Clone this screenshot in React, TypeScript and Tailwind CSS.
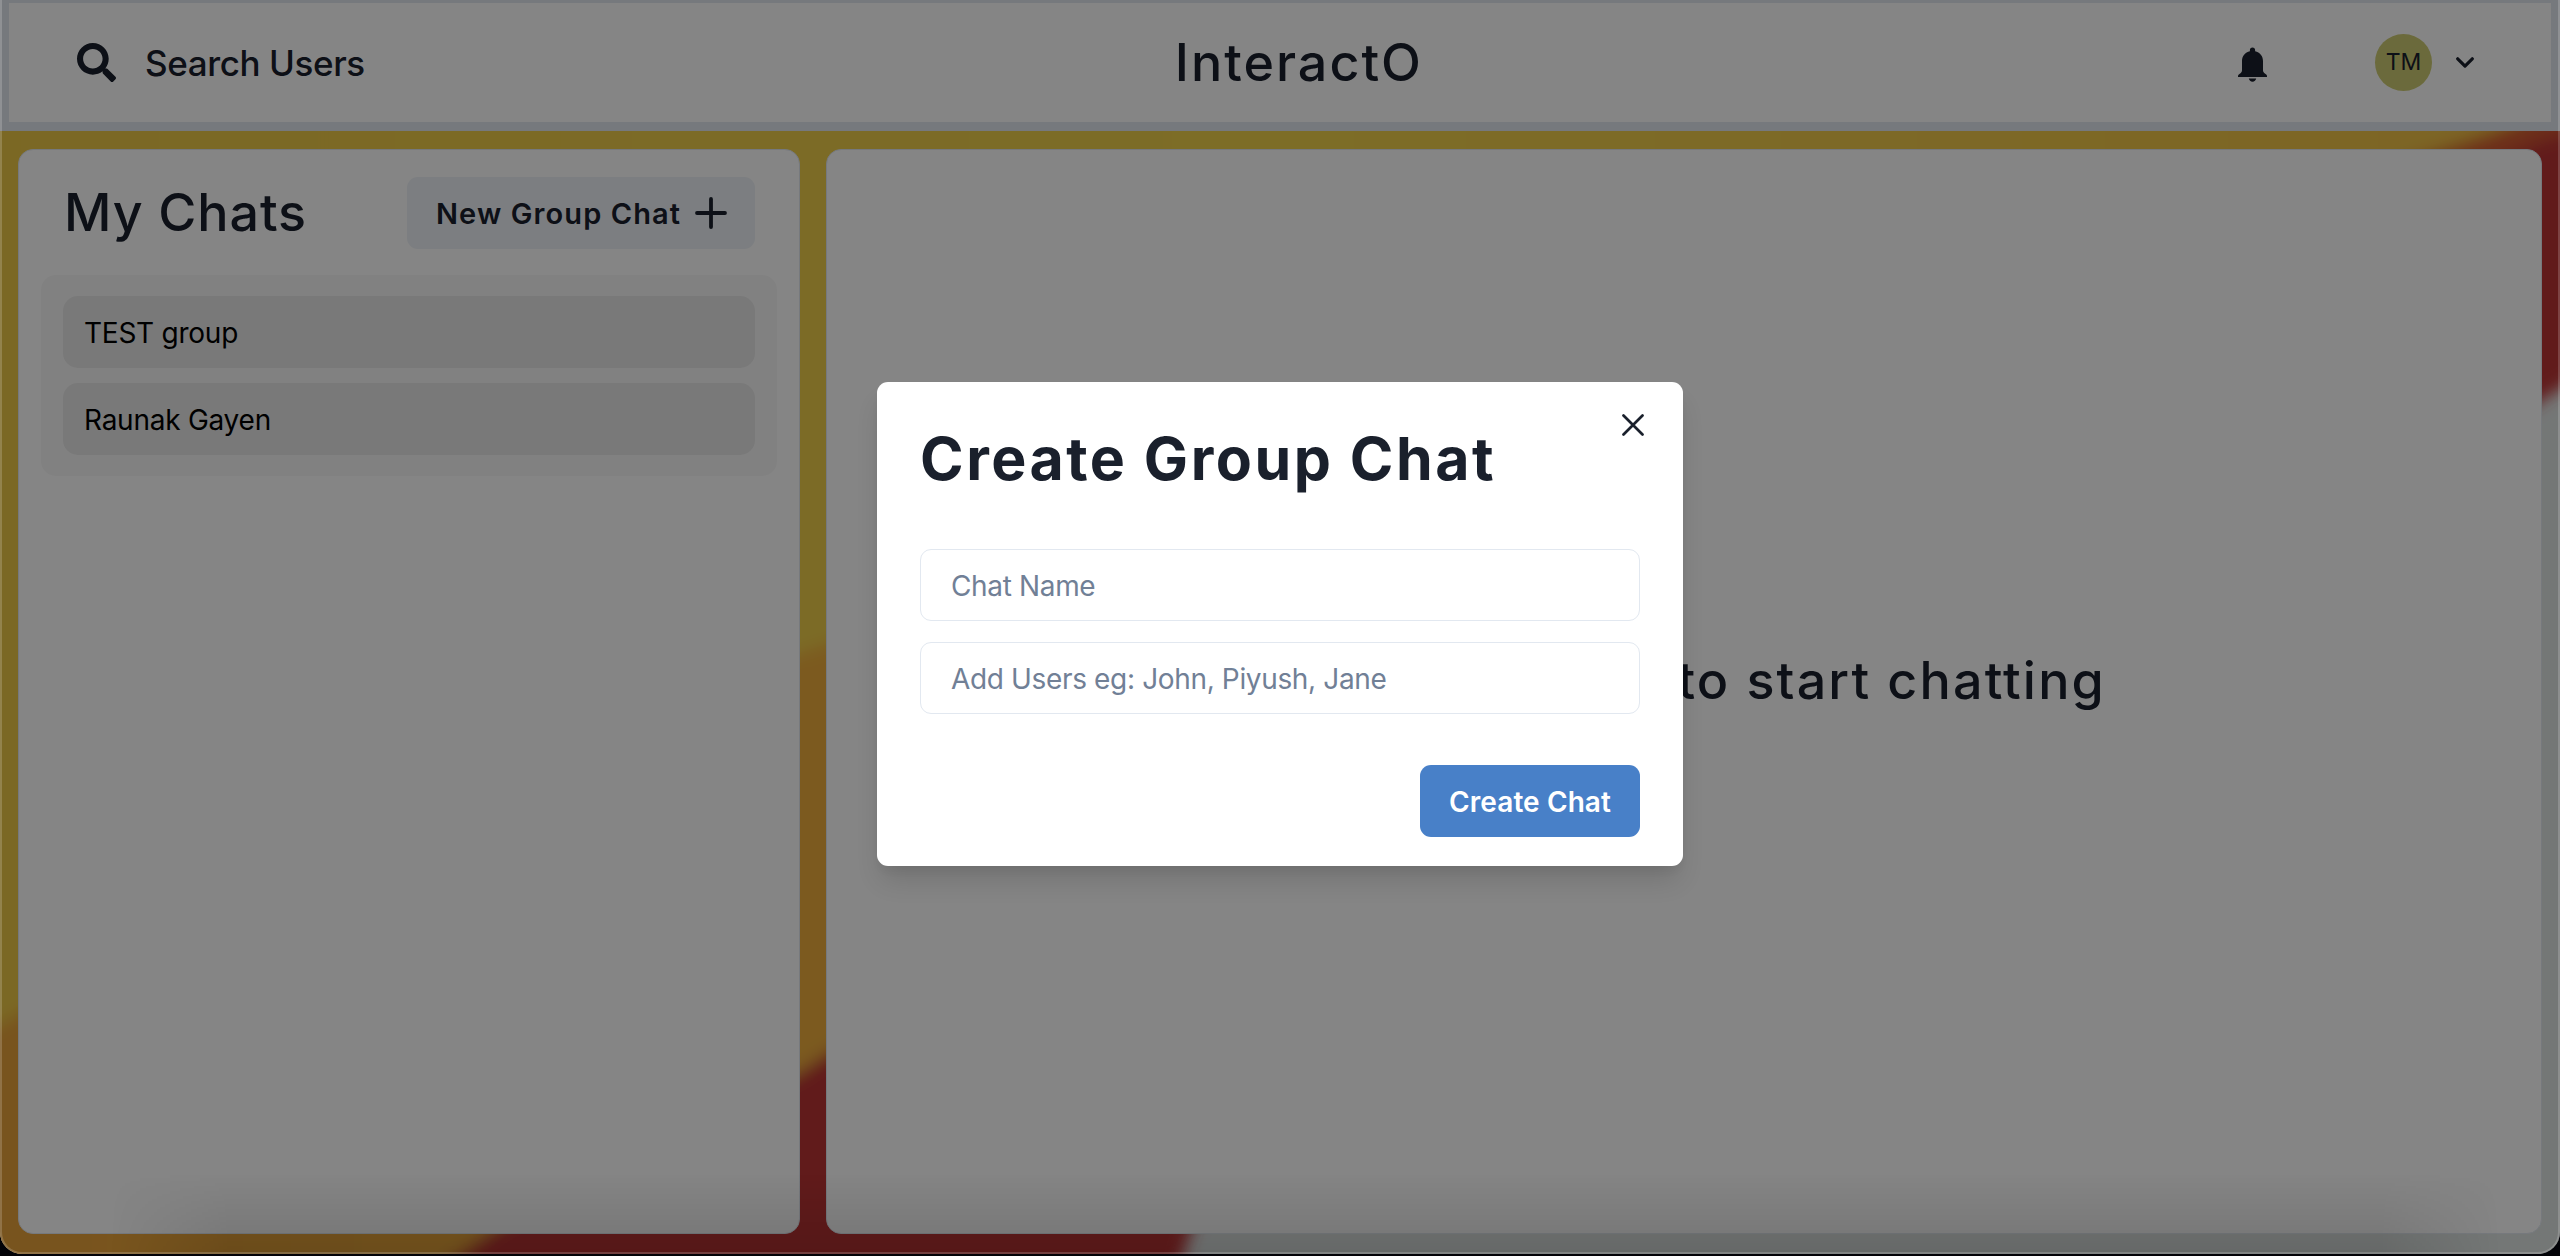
import { FaSearch } from "react-icons/fa";

const chats = ["TEST group", "Raunak Gayen"];

function Backdrop() {
  return (
    <svg className="absolute inset-0 h-full w-full" viewBox="0 0 2560 1254" preserveAspectRatio="none" aria-hidden="true">
      <defs>
        <filter id="soft" x="-5%" y="-5%" width="110%" height="110%">
          <feGaussianBlur stdDeviation="8" />
        </filter>
        <linearGradient id="sun" x1="0" y1="0" x2="1" y2="0">
          <stop offset="0" stopColor="#ebc745" />
          <stop offset="0.5" stopColor="#efd14a" />
          <stop offset="1" stopColor="#efbf45" />
        </linearGradient>
        <linearGradient id="amber" x1="0" y1="0" x2="1" y2="0">
          <stop offset="0" stopColor="#e6a03a" />
          <stop offset="0.4" stopColor="#eeb03e" />
          <stop offset="1" stopColor="#d0542f" />
        </linearGradient>
      </defs>
      <rect width="2560" height="1254" fill="#dfe4e3" />
      <g filter="url(#soft)">
        <path d="M-60 -60H2640V340L2550 395C2100 700 1400 800 1190 1234L1164 1320H-60Z" fill="#bb3434" />
        <path d="M-60 -60H2640V110L2540 141L2400 200L826 1054L800 1072L500 1225L450 1260L400 1320H-60Z" fill="url(#amber)" />
        <path d="M-60 -60H2640V70L2490 133C2000 300 1300 480 826 644L800 653C500 780 200 900 0 1025L-60 1060Z" fill="url(#sun)" />
      </g>
    </svg>
  );
}

function BellIcon() {
  return (
    <svg className="mt-1 h-[35px] w-[29px]" viewBox="0 0 29 35" fill="currentColor" aria-hidden="true">
      <path d="M14.5 0.5c1.6 0 2.6 1.1 2.6 2.5v1.3c4.8 1 7.9 4.800 7.900 9.700v9.500c0 1 .4 1.800 1.200 2.400l1.700 1.300c.7.5 1.100 1.100 1.100 1.800v.9H0v-.9c0-.7.4-1.300 1.100-1.800l1.700-1.300c.8-.6 1.200-1.400 1.200-2.400V14c0-4.900 3.100-8.700 7.900-9.700V3c0-1.400 1-2.500 2.600-2.500z" />
      <path d="M10.800 31.500h7.400c-.4 2-1.800 3.200-3.700 3.200s-3.300-1.200-3.700-3.200z" />
    </svg>
  );
}

function Header() {
  return (
    <header className="flex h-[131px] shrink-0 items-center justify-between border-x-9 border-t-3 border-b-9 border-[#e2e8f0] bg-white pr-[77px] pl-[68px]">
      <div className="flex items-center">
        <FaSearch className="-mt-px size-[39px]" />
        <span className="mt-0.5 ml-[29px] text-[35px] leading-none font-medium tracking-[-0.4px]">Search Users</span>
      </div>
      <h1 className="-ml-[5px] pt-px text-center text-[52px] leading-none font-medium tracking-[2px]">InteractO</h1>
      <div className="flex items-center justify-end">
        <BellIcon />
        <div className="ml-[108px] flex size-[57px] items-center justify-center rounded-full bg-[#cecc73] text-[23px]">TM</div>
        <svg className="ml-[24px] h-[11px] w-[18px]" viewBox="0 0 18 11" fill="none" stroke="currentColor" strokeWidth="3.2" strokeLinecap="round" strokeLinejoin="round" aria-hidden="true">
          <path d="M1.700 1.800 9 9.100l7.300-7.300" />
        </svg>
      </div>
    </header>
  );
}

function ChatList() {
  return (
    <aside className="flex w-[782px] flex-col rounded-[15px] border border-[#e2e8f0] bg-white px-[22px] pt-[27px]">
      <div className="flex items-center justify-between pr-[22px] pl-[23px]">
        <h2 className="text-[52px] leading-none font-medium tracking-[0.900px]">My Chats</h2>
        <button className="flex h-[72px] w-[348px] items-center rounded-[11px] bg-[#edf2f7] pl-[29px] text-[29px] leading-none font-semibold tracking-[1.100px] whitespace-nowrap">
          New Group Chat
          <svg className="ml-[14px] size-8" viewBox="0 0 32 32" stroke="currentColor" strokeWidth="3.800" strokeLinecap="round" aria-hidden="true">
            <path d="M16 2v28M2 16h28" />
          </svg>
        </button>
      </div>
      <ul className="mt-[26px] flex flex-col gap-[15px] rounded-[15px] bg-[#f8f8f8] py-[21px] pr-[22px] pl-[22px]">
        {chats.map((name) => (
          <li key={name} className="flex h-[72px] items-center rounded-[15px] bg-[#e8e8e8] px-[21px] pt-px text-[28px] tracking-[-0.250px] text-black">
            {name}
          </li>
        ))}
      </ul>
    </aside>
  );
}

function GroupChatModal() {
  return (
    <div className="absolute inset-0 flex items-start justify-center bg-black/48 pt-[382px]">
      <section className="relative h-[484px] w-[806px] rounded-[11px] bg-white px-[43px] shadow-[0_18px_27px_-5px_rgba(0,0,0,0.14),0_7px_11px_-4px_rgba(0,0,0,0.06)]">
        <button className="absolute top-[32px] right-[39px]" aria-label="Close">
          <svg className="size-[22px]" viewBox="0 0 22 22" stroke="#1a202c" strokeWidth="2.700" strokeLinecap="round" aria-hidden="true">
            <path d="M1.500 1.500l19 19M20.500 1.500l-19 19" />
          </svg>
        </button>
        <h2 className="pt-[46px] text-[59px] leading-[62px] font-bold tracking-[2.500px] whitespace-nowrap">Create Group Chat</h2>
        <div className="mt-[59px] flex flex-col gap-[21px]">
          <input className="h-[72px] w-full rounded-[11px] border-[1.500px] border-[#e2e8f0] px-[30px] pt-0.5 text-[28px] tracking-[-0.350px] placeholder:text-[#718096]" placeholder="Chat Name" />
          <input className="h-[72px] w-full rounded-[11px] border-[1.500px] border-[#e2e8f0] px-[30px] pt-0.5 text-[28px] tracking-[-0.350px] placeholder:text-[#718096]" placeholder="Add Users eg: John, Piyush, Jane" />
        </div>
        <div className="mt-[51px] flex justify-end">
          <button className="h-[72px] w-[220px] rounded-[11px] bg-[#4880c8] pt-0.5 text-[28px] font-semibold tracking-[0.100px] text-white">Create Chat</button>
        </div>
      </section>
    </div>
  );
}

export default function App() {
  return (
    <div className="h-[1256px] w-[2560px] overflow-hidden bg-[#030308] font-['Inter',sans-serif] text-[#1a202c]">
      <div className="relative h-[1254px] overflow-hidden rounded-b-[22px]">
        <Backdrop />
        <div className="relative flex h-full flex-col">
          <Header />
          <main className="flex min-h-0 flex-1 gap-[26px] px-[18px] pt-[18px] pb-5">
            <ChatList />
            <section className="flex flex-1 items-center justify-center rounded-[15px] border border-[#e2e8f0] bg-white pb-[21px]">
              <p className="text-[52px] font-medium tracking-[2.150px] whitespace-nowrap">Click on a user to start chatting</p>
            </section>
          </main>
        </div>
        <GroupChatModal />
        <div className="pointer-events-none absolute right-[60px] bottom-0 left-[110px] h-20 bg-linear-to-t from-black/12 to-transparent mask-x-from-95%" />
        <div className="pointer-events-none absolute inset-0 rounded-b-[22px] border-x-2 border-b-2 border-white/18" />
      </div>
    </div>
  );
}
